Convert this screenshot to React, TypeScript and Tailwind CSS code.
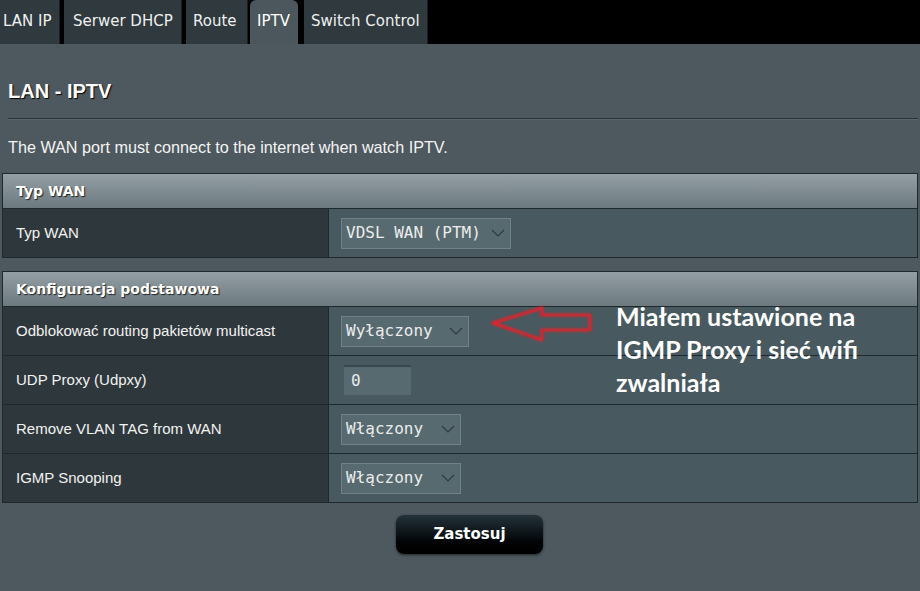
import React from 'react';

const TABS = [
  { label: 'LAN IP', w: 'w-[60px]', pl: 'pl-[3px]' },
  { label: 'Serwer DHCP', w: 'w-[118px]', pl: 'pl-[9px]' },
  { label: 'Route', w: 'w-[62px]', pl: 'pl-[7px]' },
  { label: 'IPTV', w: 'w-[48px]', pl: 'pl-[7px]', active: true },
  { label: 'Switch Control', w: 'w-[124px]', pl: 'pl-[7px]' },
];

const ROWS = [
  { label: 'Odblokować routing pakietów multicast', value: 'Wyłączony', w: 'w-[128px]' },
  { label: 'UDP Proxy (Udpxy)', value: '0', input: true },
  { label: 'Remove VLAN TAG from WAN', value: 'Włączony', w: 'w-[120px]' },
  { label: 'IGMP Snooping', value: 'Włączony', w: 'w-[120px]' },
];

function Chevron() {
  return (
    <svg width="14" height="8" viewBox="0 0 14 8" className="shrink-0">
      <path d="M1 1 L7 7 L13 1" fill="none" stroke="#2c393d" strokeWidth="1.1" />
    </svg>
  );
}

function Select({ value, w }: { value: string; w: string }) {
  return (
    <div className={`${w} h-[31px] flex items-center justify-between pl-[4px] pr-[5px] bg-[#576a70] border border-[#718187] text-[16px] text-[#ececec] font-['DejaVu_Sans_Mono',monospace] whitespace-pre`}>
      <span>{value}</span>
      <Chevron />
    </div>
  );
}

function Header({ title }: { title: string }) {
  return (
    <div className="h-[34px] flex items-center pl-[13px] bg-gradient-to-b from-[#939fa4] to-[#6c797e] text-white text-[14px] font-bold font-['DejaVu_Sans',sans-serif] [text-shadow:1px_1px_1px_#1b2326]">
      {title}
    </div>
  );
}

function Row({ label, children }: { label: string; children: React.ReactNode }) {
  return (
    <div className="flex h-[49px] border-t border-[#1f282b]">
      <div className="w-[326px] shrink-0 flex items-center pl-[13px] bg-[#2e383c] border-r border-[#1f282b] text-[15px] text-[#f2f2f2]">
        {label}
      </div>
      <div className="flex-1 flex items-center pl-[12px] bg-[#485a60]">{children}</div>
    </div>
  );
}

export default function App() {
  return (
    <div className="relative w-[920px] h-[591px] overflow-hidden bg-[#4e595f] font-['Liberation_Sans',Arial,sans-serif]">
      <div className="h-[44px] bg-black flex">
        {TABS.map((t, i) => (
          <div
            key={t.label}
            className={`${t.w} ${t.pl} ${i === 0 ? '' : i === 3 ? 'ml-[2px]' : i === 4 ? 'ml-[6px]' : 'ml-[4px]'} flex items-start pt-[10px] text-[15px] font-['DejaVu_Sans',sans-serif] ${
              t.active ? 'bg-[#4b575c] rounded-t-[6px] text-white' : 'bg-[#2f393e] text-[#eef0f0] border-r border-[#182024]'
            }`}
          >
            {t.label}
          </div>
        ))}
      </div>

      <div className="pt-[35px]">
        <h1 className="pl-[8px] text-[20px] leading-[24px] font-bold text-white [text-shadow:1px_1px_1px_#000]">LAN - IPTV</h1>
        <div className="mt-[15px] ml-[8px] mr-[2px] h-[2px] border-t border-[#2a3337] bg-[#5a656a]" />
        <p className="mt-[17px] pl-[8px] text-[16.2px] leading-[20px] text-[#f4f4f4]">
          The WAN port must connect to the internet when watch IPTV.
        </p>

        <div className="mt-[16px] ml-[2px] w-[916px] border border-[#1f282b]">
          <Header title="Typ WAN" />
          <Row label="Typ WAN">
            <Select value="VDSL WAN (PTM)" w="w-[170px]" />
          </Row>
        </div>

        <div className="mt-[13px] ml-[2px] w-[916px] border border-[#1f282b]">
          <Header title="Konfiguracja podstawowa" />
          {ROWS.map((r) => (
            <Row key={r.label} label={r.label}>
              {r.input ? (
                <div className="ml-[3px] w-[67px] h-[30px] flex items-center pl-[7px] bg-[#576a70] border-t-2 border-[#3a474c] text-[16px] text-[#ececec] font-['DejaVu_Sans_Mono',monospace]">
                  {r.value}
                </div>
              ) : (
                <Select value={r.value} w={r.w!} />
              )}
            </Row>
          ))}
        </div>

        <div className="mt-[12px] pl-[396px]">
          <button className="w-[147px] h-[39px] rounded-[8px] bg-gradient-to-b from-[#24323a] via-[#0b1216] to-black shadow-[0_1px_3px_rgba(0,0,0,0.6)] text-white text-[15px] font-bold font-['DejaVu_Sans',sans-serif]">
            Zastosuj
          </button>
        </div>
      </div>

      <svg className="absolute left-[490px] top-[302px]" width="106" height="46" viewBox="0 0 106 46">
        <defs>
          <filter id="soft" x="-10%" y="-20%" width="120%" height="140%">
            <feGaussianBlur stdDeviation="0.9" />
          </filter>
        </defs>
        <path
          d="M3 21 L52 6 L52 13 L100 13 L100 28 L52 28 L52 38 Z"
          fill="none"
          stroke="#e3202c"
          strokeWidth="3.2"
          strokeLinejoin="round"
          filter="url(#soft)"
        />
      </svg>

      <div className="absolute left-[616px] top-[300px] text-[25px] leading-[33px] font-bold text-white font-['Lato',sans-serif]">
        <div>Miałem ustawione na</div>
        <div>IGMP Proxy i sieć wifi</div>
        <div>zwalniała</div>
      </div>
    </div>
  );
}
